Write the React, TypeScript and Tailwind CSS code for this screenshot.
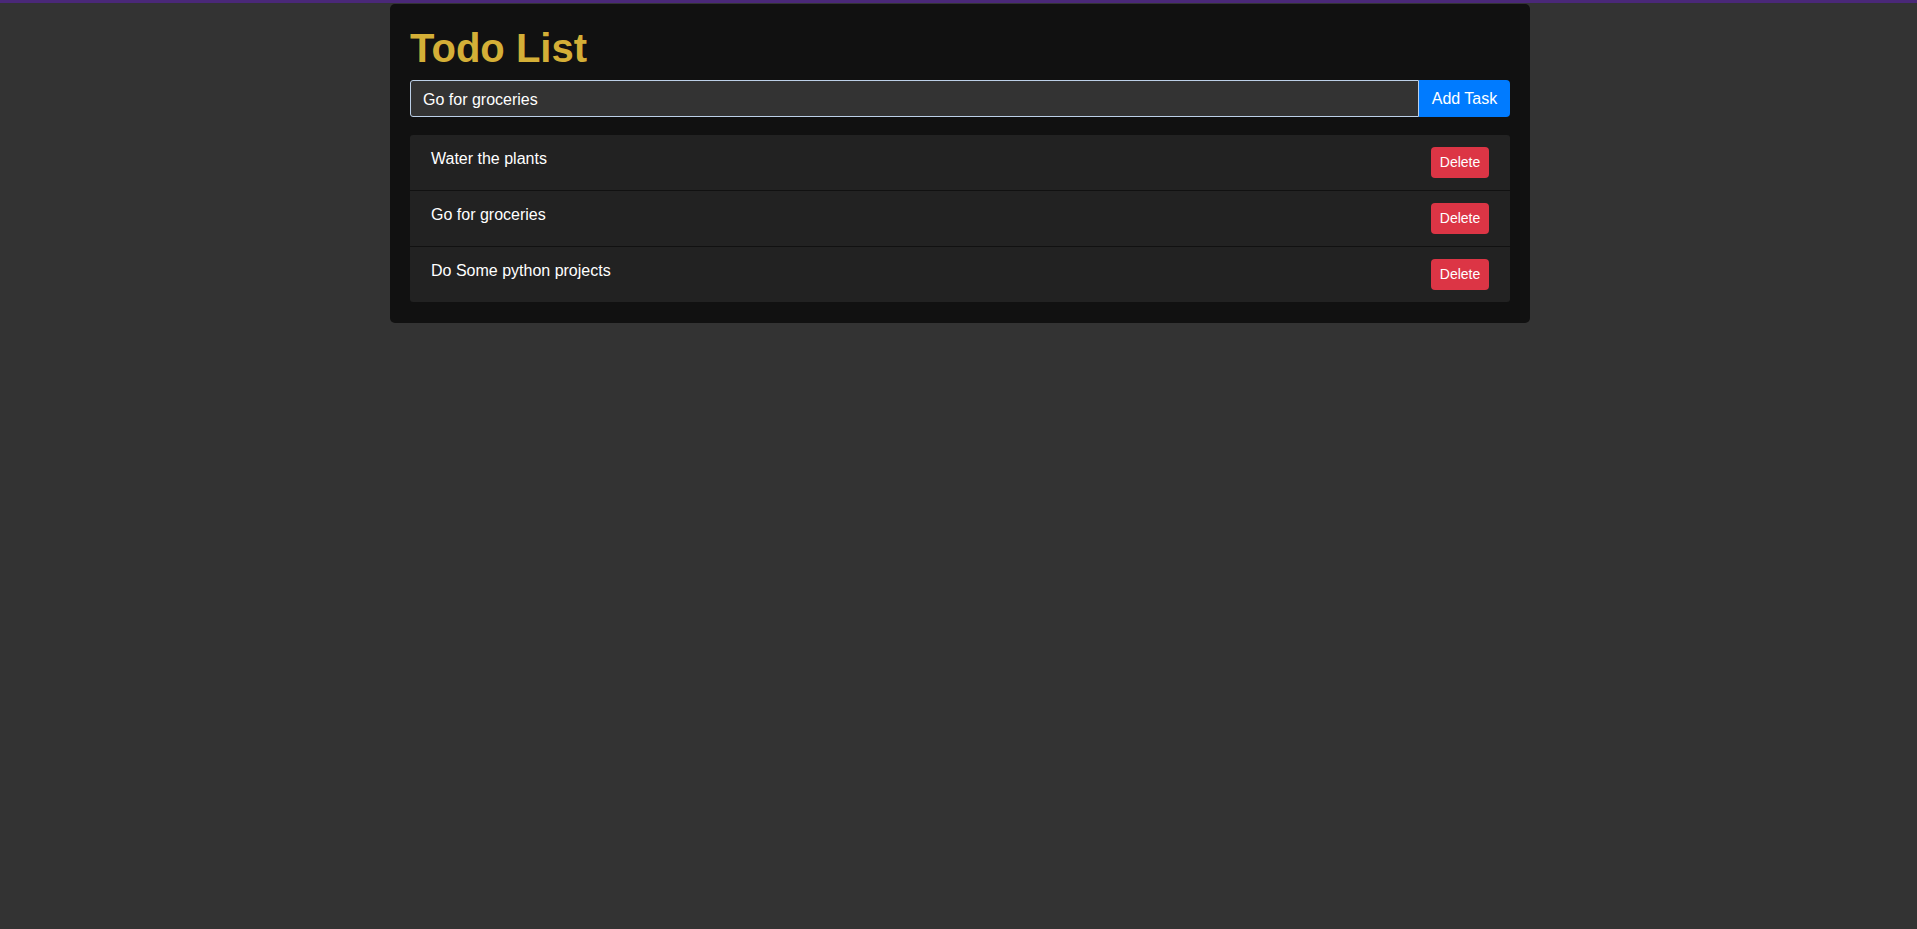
import React, { useState } from 'react';

const App: React.FC = () => {
  const [tasks, setTasks] = useState<string[]>([
    'Water the plants',
    'Go for groceries',
    'Do Some python projects',
  ]);
  const [input, setInput] = useState('Go for groceries');

  const addTask = () => {
    if (!input.trim()) return;
    setTasks([...tasks, input.trim()]);
    setInput('');
  };

  const removeTask = (idx: number) => {
    setTasks(tasks.filter((_, i) => i !== idx));
  };

  return (
    <div className="min-h-screen bg-[#333333] font-['Liberation_Sans',Arial,sans-serif] text-white">
      <div className="h-[3px] bg-[#4a2878]" />
      <div className="flex justify-center pt-px pl-[3px]">
        <div className="w-[1140px] bg-[#111111] rounded-[5px] px-[20px] pt-[22px] pb-[21px]">
          <h1 className="text-[40px] font-bold leading-[45px] text-[#d4af37] mb-[9px]">Todo List</h1>

          {/* Input row */}
          <div className="flex">
            <input
              value={input}
              onChange={(e) => setInput(e.target.value)}
              className="flex-1 h-[37px] bg-[#333333] border border-[#bcd0e8] rounded-l-[3px] px-[12px] pt-[2px] text-[16px] text-white outline-none"
            />
            <button
              onClick={addTask}
              className="w-[91px] h-[37px] bg-[#007bff] text-white text-[16px] rounded-r-[4px]"
            >
              Add Task
            </button>
          </div>

          {/* Tasks */}
          <ul className="mt-[18px] bg-[#222222] rounded-[3px]">
            {tasks.map((task, i) => (
              <li
                key={i}
                className={`flex justify-between items-start pl-[21px] pr-[21px] py-[12px] ${
                  i > 0 ? 'border-t border-[#111111]' : ''
                }`}
              >
                <span className="mt-[3px] text-[16px] leading-[18px]">{task}</span>
                <button
                  onClick={() => removeTask(i)}
                  className="w-[58px] h-[31px] bg-[#dc3545] text-white text-[14px] rounded-[4px]"
                >
                  Delete
                </button>
              </li>
            ))}
          </ul>
        </div>
      </div>
    </div>
  );
};

export default App;
